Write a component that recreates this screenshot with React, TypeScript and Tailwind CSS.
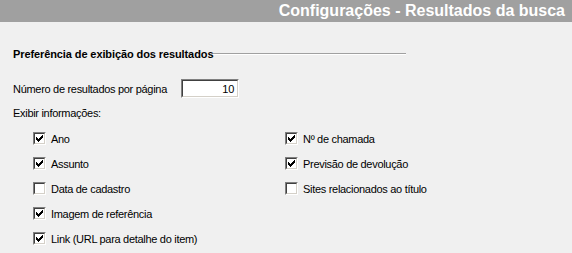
import React from "react";

const CHECK = [
  "......x",
  ".....xx",
  "x...xxx",
  "xx.xxx.",
  "xxxxx..",
  ".xxx...",
  "..x....",
];

function CheckBox({ checked }: { checked: boolean }) {
  return (
    <div className="w-[13px] h-[13px] shrink-0 border border-t-[#808080] border-l-[#808080] border-b-white border-r-white">
      <div className="w-full h-full bg-white border border-t-[#404040] border-l-[#404040] border-b-[#d4d0c8] border-r-[#d4d0c8]">
        {checked && (
          <svg width="9" height="9" viewBox="0 0 9 9" shapeRendering="crispEdges" className="block">
            {CHECK.flatMap((row, y) =>
              row.split("").map((c, x) =>
                c === "x" ? <rect key={`${x}-${y}`} x={x + 1} y={y + 1} width="1" height="1" fill="#000" /> : null
              )
            )}
          </svg>
        )}
      </div>
    </div>
  );
}

function Option({ label, checked }: { label: string; checked: boolean }) {
  return (
    <div className="h-[25px] flex items-center gap-[5px]">
      <CheckBox checked={checked} />
      <span>{label}</span>
    </div>
  );
}

export default function App() {
  const left = [
    { label: "Ano", checked: true },
    { label: "Assunto", checked: true },
    { label: "Data de cadastro", checked: false },
    { label: "Imagem de referência", checked: true },
    { label: "Link (URL para detalhe do item)", checked: true },
  ];
  const right = [
    { label: "Nº de chamada", checked: true },
    { label: "Previsão de devolução", checked: true },
    { label: "Sites relacionados ao título", checked: false },
  ];

  return (
    <div className="w-[572px] h-[253px] bg-[#f0f0f0] text-black text-[11px] leading-[14px] tracking-[-0.3px] font-['Liberation_Sans',Arial,sans-serif] overflow-hidden">
      {/* Header */}
      <div className="h-[22px] bg-[#a0a0a0] flex items-center justify-end pr-[7px]">
        <span className="text-white font-bold text-[16px] tracking-normal">Configurações - Resultados da busca</span>
      </div>

      <div className="pl-[13px]">
        {/* Section title */}
        <div className="mt-[25px] flex items-center">
          <span className="font-bold tracking-[-0.1px]">Preferência de exibição dos resultados</span>
          <div className="w-[193px] h-[2px] border-t border-t-[#a0a0a0] border-b border-b-white" />
        </div>

        <div className="mt-[18px] flex items-center">
          <span className="w-[168px]">Número de resultados por página</span>
          <div className="w-[58px] h-[19px] border border-t-[#808080] border-l-[#808080] border-b-white border-r-white">
            <div className="w-full h-full bg-white border border-t-[#404040] border-l-[#404040] border-b-[#d4d0c8] border-r-[#d4d0c8] flex items-center justify-end pr-[3px]">
              10
            </div>
          </div>
        </div>

        <div className="mt-[8px]">Exibir informações:</div>

        <div className="mt-[6px] pl-[20px] flex">
          <div className="w-[252px]">
            {left.map((o) => (
              <Option key={o.label} {...o} />
            ))}
          </div>
          <div>
            {right.map((o) => (
              <Option key={o.label} {...o} />
            ))}
          </div>
        </div>
      </div>
    </div>
  );
}
